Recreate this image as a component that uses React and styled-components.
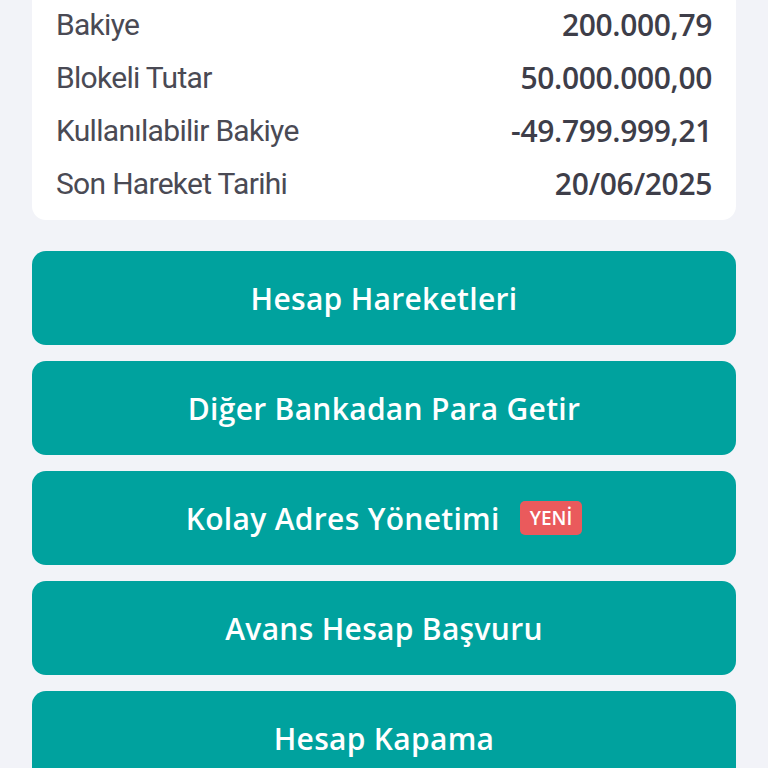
import React from "react";
import styled, { createGlobalStyle } from "styled-components";

const Global = createGlobalStyle`
  html, body { margin: 0; padding: 0; background: #f2f3f8; }
  body { font-family: "Open Sans", "Noto Sans", sans-serif; }
  * { box-sizing: border-box; }
`;

const Page = styled.div`
  width: 768px;
  height: 768px;
  overflow: hidden;
  background: #f2f3f8;
  padding: 0 32px;
  display: flex;
  flex-direction: column;
`;

const Card = styled.div`
  background: #ffffff;
  border-radius: 0 0 14px 14px;
  padding: 0 24px 13px 24px;
  display: flex;
  flex-direction: column;
  gap: 5px;
`;

const Row = styled.div`
  height: 48px;
  display: flex;
  align-items: center;
  justify-content: space-between;
  color: #45454f;
`;

const Label = styled.span`
  font-family: Roboto, "Liberation Sans", sans-serif;
  font-size: 30px;
  font-weight: 400;
  letter-spacing: -0.7px;
  color: #4a4a54;
`;

const Value = styled.span`
  font-family: "Open Sans", "Noto Sans", sans-serif;
  font-size: 30px;
  font-weight: 600;
  letter-spacing: -0.35px;
  color: #3e3e49;
`;

const Actions = styled.div`
  margin-top: 31px;
  display: flex;
  flex-direction: column;
  gap: 16px;
`;

const ActionButton = styled.button`
  height: 94px;
  width: 100%;
  border: none;
  border-radius: 14px;
  background: #00a29e;
  color: #ffffff;
  font-family: "Open Sans", "Noto Sans", sans-serif;
  font-size: 30px;
  font-weight: 600;
  letter-spacing: 0.3px;
  display: flex;
  align-items: center;
  justify-content: center;
  gap: 20px;
  flex-shrink: 0;
  cursor: pointer;
`;

const Badge = styled.span`
  background: #ea5a5c;
  color: #ffffff;
  font-family: "Open Sans", "Noto Sans", sans-serif;
  font-size: 19px;
  font-weight: 600;
  letter-spacing: 0;
  height: 34px;
  padding: 0 10px;
  border-radius: 5px;
  display: inline-flex;
  align-items: center;
`;

const rows = [
  ["Bakiye", "200.000,79"],
  ["Blokeli Tutar", "50.000.000,00"],
  ["Kullanılabilir Bakiye", "-49.799.999,21"],
  ["Son Hareket Tarihi", "20/06/2025"],
];

const actions = [
  { label: "Hesap Hareketleri" },
  { label: "Diğer Bankadan Para Getir" },
  { label: "Kolay Adres Yönetimi", badge: "YENİ" },
  { label: "Avans Hesap Başvuru" },
  { label: "Hesap Kapama" },
];

export default function App() {
  return (
    <>
      <Global />
      <Page>
        <Card>
          {rows.map(([l, v]) => (
            <Row key={l}>
              <Label>{l}</Label>
              <Value>{v}</Value>
            </Row>
          ))}
        </Card>
        <Actions>
          {actions.map((a) => (
            <ActionButton key={a.label}>
              <span>{a.label}</span>
              {a.badge && <Badge>{a.badge}</Badge>}
            </ActionButton>
          ))}
        </Actions>
      </Page>
    </>
  );
}
